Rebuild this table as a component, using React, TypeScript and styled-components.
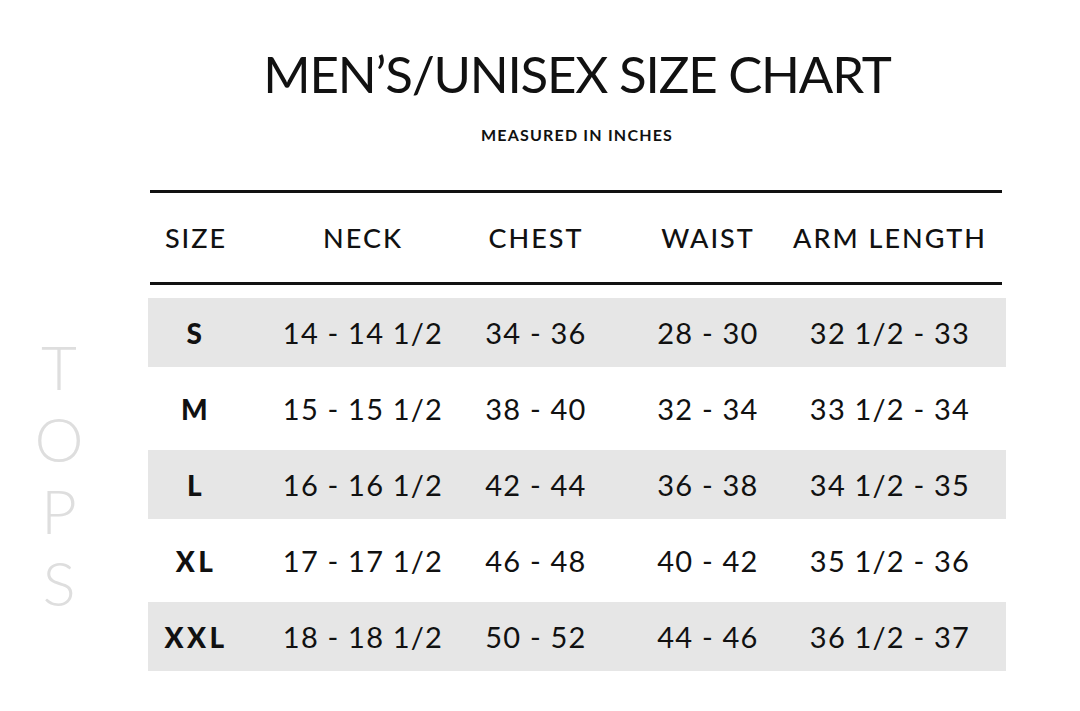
import styled, { createGlobalStyle } from "styled-components";

interface ISizeRow {
    size: string;
    neck: string;
    chest: string;
    waist: string;
    arm: string;
}

const rows: ISizeRow[] = [
    { size: "S", neck: "14 - 14 1/2", chest: "34 - 36", waist: "28 - 30", arm: "32 1/2 - 33" },
    { size: "M", neck: "15 - 15 1/2", chest: "38 - 40", waist: "32 - 34", arm: "33 1/2 - 34" },
    { size: "L", neck: "16 - 16 1/2", chest: "42 - 44", waist: "36 - 38", arm: "34 1/2 - 35" },
    { size: "XL", neck: "17 - 17 1/2", chest: "46 - 48", waist: "40 - 42", arm: "35 1/2 - 36" },
    { size: "XXL", neck: "18 - 18 1/2", chest: "50 - 52", waist: "44 - 46", arm: "36 1/2 - 37" },
];

const headers = ["SIZE", "NECK", "CHEST", "WAIST", "ARM LENGTH"];

const App = () => {
    return (
        <>
            <GlobalStyle />
            <Page>
                <SideLabel>
                    {"TOPS".split("").map((ch) => (
                        <SideLetter key={ch}>{ch}</SideLetter>
                    ))}
                </SideLabel>
                <Main>
                    <Title>MEN’S/UNISEX SIZE CHART</Title>
                    <Subtitle>MEASURED IN INCHES</Subtitle>
                    <Rule />
                    <HeaderRow>
                        {headers.map((h) => (
                            <HeaderCell key={h}>{h}</HeaderCell>
                        ))}
                    </HeaderRow>
                    <Rule />
                    <Body>
                        {rows.map((row, i) => (
                            <Row key={row.size} $shaded={i % 2 === 0}>
                                <SizeCell>{row.size}</SizeCell>
                                <Cell>{row.neck}</Cell>
                                <Cell>{row.chest}</Cell>
                                <Cell>{row.waist}</Cell>
                                <Cell>{row.arm}</Cell>
                            </Row>
                        ))}
                    </Body>
                </Main>
            </Page>
        </>
    );
};

const GlobalStyle = createGlobalStyle`
    body {
        margin: 0;
        background: #fff;
        font-family: Lato, "Noto Sans", sans-serif;
        color: #111;
    }
`;

const Page = styled.div`
    display: flex;
    width: 1080px;
    height: 711px;
    box-sizing: border-box;
`;

const SideLabel = styled.div`
    width: 118px;
    display: flex;
    flex-direction: column;
    align-items: center;
    padding-top: 330px;
    margin-right: 30px;
`;

const SideLetter = styled.span`
    font-size: 62px;
    font-weight: 300;
    line-height: 72px;
    color: #dedede;
`;

const Main = styled.div`
    width: 858px;
    display: flex;
    flex-direction: column;
    padding-top: 44px;
`;

const Title = styled.h1`
    margin: 0;
    text-align: center;
    font-size: 51px;
    font-weight: 400;
    line-height: 60px;
    letter-spacing: -1.2px;
`;

const Subtitle = styled.div`
    margin: 22px 0 46px;
    text-align: center;
    font-size: 16px;
    font-weight: 700;
    letter-spacing: 1.2px;
    line-height: 18px;
`;

const Rule = styled.div`
    height: 3px;
    margin: 0 4px 0 2px;
    background: #111;
`;

// column widths chosen so each column's centre lines up with the chart
const columns = "96px 238px 108px 236px 128px";

const HeaderRow = styled.div`
    display: grid;
    grid-template-columns: ${columns};
    align-items: center;
    height: 89px;
`;

const HeaderCell = styled.div`
    justify-self: center;
    white-space: nowrap;
    font-size: 27px;
    font-weight: 500;
    letter-spacing: 2px;
`;

const Body = styled.div`
    margin-top: 13px;
    display: flex;
    flex-direction: column;
`;

const Row = styled.div<{ $shaded: boolean }>`
    display: grid;
    grid-template-columns: ${columns};
    align-items: center;
    height: ${(props) => (props.$shaded ? "69px" : "83px")};
    background: ${(props) => (props.$shaded ? "#e6e6e6" : "transparent")};
`;

const Cell = styled.div`
    justify-self: center;
    white-space: nowrap;
    font-size: 29px;
    letter-spacing: 1.2px;
`;

const SizeCell = styled(Cell)`
    font-weight: 900;
    font-size: 28px;
    letter-spacing: 3.5px;
`;

export default App;
